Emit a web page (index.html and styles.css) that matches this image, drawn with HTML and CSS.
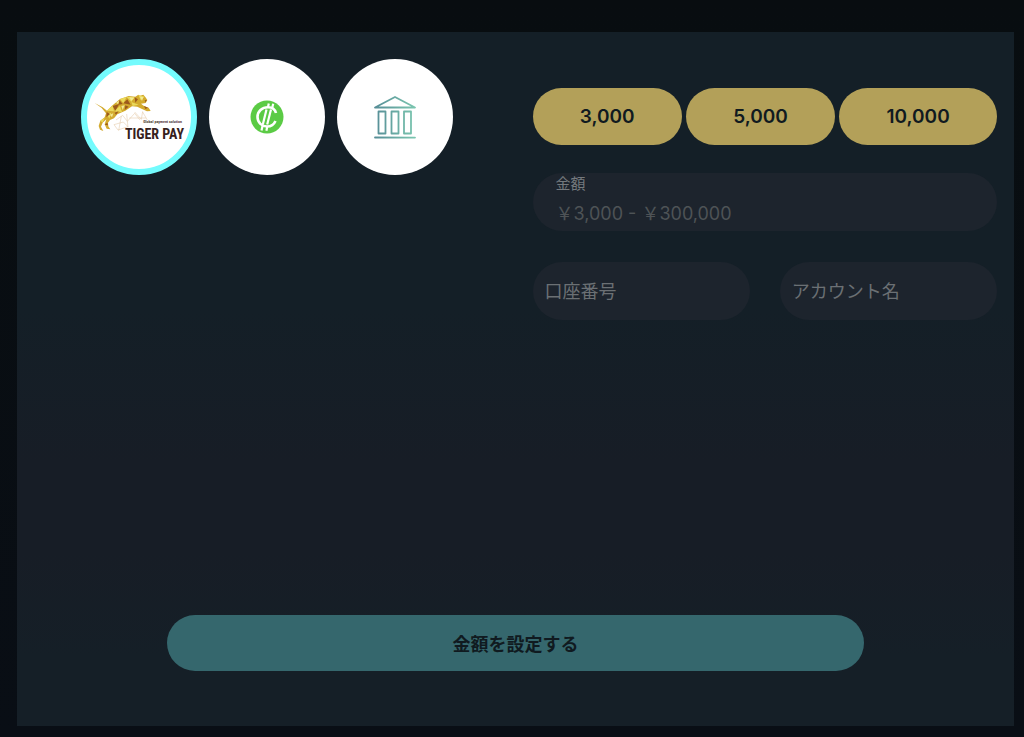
FILE: index.html
```
<!DOCTYPE html>
<html lang="ja">
<head>
<meta charset="UTF-8">
<meta name="viewport" content="width=device-width, initial-scale=1.0">
<title>金額を設定する</title>
<link rel="stylesheet" href="styles.css">
</head>
<body>

<form class="panel">
  <div class="columns">
    <div class="methods">
      <label class="method">
        <input type="radio" name="method" value="tigerpay" aria-label="TIGER PAY" checked>
        <svg class="logo-tiger" viewBox="0 0 104 104">
          <!-- drawn on a grid three times finer than the logo -->
          <g transform="translate(5 27) scale(0.3333)">
            <path fill="none" stroke="#e0c39c" stroke-width="1.500" d="M72 84l20-14 14 18 22-24 16 20M66 98l28-8 14 14-30 10zM88 72l-8 44M104 66l4 40M128 60l20 22 4-24M152 60l14 24M112 78h50"/>
            <path fill="#d3aa2e" d="M8 33L32 46L45 56L60 41L84 21L110 12L130 14L139 8L144 11L154 8L160 15L166 24L161 33L147 35L156 42L170 47L176 57L165 58L150 51L136 44L120 43L100 56L76 67L66 79L54 84L48 92L49 103L55 112L44 110L38 97L43 82L32 92L27 104L34 117L24 113L20 102L25 86L38 76L42 64L29 48Z"/>
            <path fill="#ead95a" d="M45 56L62 40L66 58ZM84 21L104 15L94 34ZM104 15L128 15L118 30ZM139 9L158 14L146 24ZM66 58L84 42L90 60ZM44 66L58 62L52 80ZM25 86L38 77L32 92ZM118 30L140 38L122 42Z"/>
            <path fill="#9c5a1c" d="M62 42L82 36L70 56ZM94 34L106 22L116 38ZM82 24L92 36L80 38ZM44 60L54 66L43 76ZM128 16L138 22L130 32ZM100 40L110 44L98 54ZM68 62L80 58L72 68ZM38 98L46 92L48 100ZM156 42L168 47L160 51ZM158 24L165 25L160 31Z"/>
            <path fill="#f3ea96" d="M72 32L82 26L78 36ZM112 16L126 18L118 26ZM144 14L154 16L150 27ZM54 68L64 64L60 76ZM88 42L98 40L92 54Z"/>
          </g>
          <text class="tagline" x="95" y="58" text-anchor="end">Global payment solution</text>
          <text class="wordmark" x="97" y="74" text-anchor="end">TIGER PAY</text>
        </svg>
      </label>
      <label class="method">
        <input type="radio" name="method" value="crypto" aria-label="Crypto">
        <svg class="logo-coin" viewBox="0 0 34 34">
          <circle cx="17" cy="17" r="16.500" fill="#5bcb45"/>
          <g fill="none" stroke="#fff" stroke-width="2.600">
            <path d="M26 13C25 9 22 7.200 18 7.200C12 7.200 7.500 11.500 7.500 17C7.500 22.500 12 26.500 17 26.500C21 26.500 24 24.500 25.500 21"/>
            <path d="M16.500 9.500L12.800 24.500M21 9.500L17.200 24.500" stroke-width="2.200"/>
            <path d="M18.800 3.500L18 7M23.200 3.800L22.200 8M12.500 26L11.500 30.500M17.200 27L16.400 30.800" stroke-width="2.200"/>
          </g>
        </svg>
      </label>
      <label class="method">
        <input type="radio" name="method" value="bank" aria-label="Bank">
        <svg class="logo-bank" viewBox="0 0 44 44">
          <defs>
            <linearGradient id="bankStroke" gradientUnits="userSpaceOnUse" x1="0" y1="0" x2="44" y2="0">
              <stop offset="0" stop-color="#558b96"/>
              <stop offset="1" stop-color="#7cc8b0"/>
            </linearGradient>
          </defs>
          <g fill="none" stroke="url(#bankStroke)" stroke-width="1.800" stroke-linejoin="round" stroke-linecap="round">
            <path d="M2 12.500L22 2L42 12.500Z"/>
            <path d="M5.500 16.500H12.500V38.500H5.500ZM18.500 16.500H25.500V38.500H18.500ZM31 16.500H38V38.500H31Z"/>
            <path d="M2 42.500L42 42.600"/>
          </g>
        </svg>
      </label>
    </div>

    <div class="details">
      <div class="presets">
        <button type="button" class="preset">3,000</button>
        <button type="button" class="preset">5,000</button>
        <button type="button" class="preset">10,000</button>
      </div>
      <div class="fields">
        <div class="field amount">
          <label for="amount">金額</label>
          <input type="text" id="amount" placeholder="￥3,000 - ￥300,000">
        </div>
        <div class="field">
          <input type="text" aria-label="口座番号" placeholder="口座番号">
        </div>
        <div class="field">
          <input type="text" aria-label="アカウント名" placeholder="アカウント名">
        </div>
      </div>
    </div>
  </div>

  <button type="submit" class="submit">金額を設定する</button>
</form>

</body>
</html>
```
FILE: styles.css
```
* {
  box-sizing: border-box;
}
body {
  margin: 0;
  min-height: 100vh;
  display: flex;
  padding: 32px 10px 11px 17px;
  background: linear-gradient(#080d10, #090e15);
  font-family: Inter, "Noto Sans CJK JP", sans-serif;
}
button,
input {
  font-family: inherit;
}
.panel {
  flex: 1;
  display: flex;
  flex-direction: column;
  justify-content: space-between;
  padding-bottom: 55px;
  background: linear-gradient(#141f27 40%, #171d26 62%, #171d26 75%, #151f27 90%);
}
.columns {
  display: grid;
  grid-template-columns: 1fr 1fr;
}

/* payment methods */
.methods {
  display: flex;
  flex-wrap: wrap;
  gap: 12px;
  padding: 27px 0 0 64px;
}
.method {
  position: relative;
  width: 116px;
  height: 116px;
  display: flex;
  align-items: center;
  justify-content: center;
  border-radius: 50%;
  background: #fff;
  cursor: pointer;
}
.method:has(input:checked) {
  border: 6px solid #74fbfd;
}
.method input {
  position: absolute;
  opacity: 0;
}
.logo-tiger {
  width: 104px;
  height: 104px;
}
.logo-coin {
  width: 34px;
  height: 34px;
}
.logo-bank {
  width: 44px;
  height: 44px;
}
.wordmark {
  font: bold 14px "Liberation Sans Narrow", "Roboto Condensed", "Liberation Sans", sans-serif;
  fill: #35201c;
}
.tagline {
  font: bold 4px "Liberation Sans Narrow", "Roboto Condensed", "Liberation Sans", sans-serif;
  fill: #54413c;
}

/* amount and account */
.details {
  padding: 56px 17px 0;
}
.presets {
  display: flex;
  gap: 4px;
  margin-bottom: 28px;
}
.preset {
  flex: 1 1 auto;
  height: 57px;
  padding: 0;
  border: none;
  border-radius: 29px;
  background: #b3a059;
  color: #101a20;
  font-size: 19px;
  font-weight: 600;
  cursor: pointer;
}
.fields {
  display: grid;
  grid-template-columns: 1fr 1fr;
  gap: 31px 30px;
}
.field {
  display: flex;
  flex-direction: column;
  height: 58px;
  border-radius: 29px;
  background: #1d242d;
  overflow: hidden;
}
.field input {
  flex: 1;
  width: 100%;
  min-height: 0;
  padding: 0 12px;
  border: none;
  outline: none;
  background: none;
  color: #d0d4d8;
  font-size: 18px;
}
.field input::placeholder {
  color: #6b7074;
}
.amount {
  grid-column: 1 / -1;
}
.amount label {
  padding-left: 23px;
  color: #74797d;
  font-size: 15px;
  line-height: 22px;
}
.amount input {
  padding: 0 23px;
}
.amount input::placeholder {
  color: #4e5356;
}

.submit {
  align-self: center;
  width: 70%;
  height: 56px;
  border: none;
  border-radius: 28px;
  background: #35676d;
  color: #101a20;
  font-size: 18px;
  font-weight: 600;
  cursor: pointer;
}
```
